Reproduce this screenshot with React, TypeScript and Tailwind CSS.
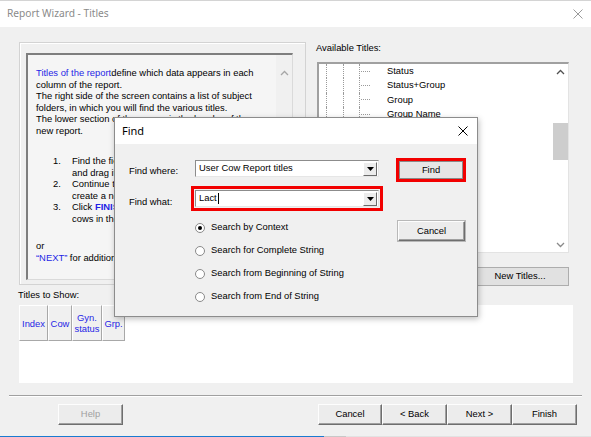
import React from 'react';

const sans = "font-['Liberation_Sans',Arial,sans-serif]";

function Chevron({ up = true, color = '#a0a0a0' }: { up?: boolean; color?: string }) {
  return (
    <svg width="9" height="6" viewBox="0 0 9 6">
      <path
        d={up ? 'M1 5 L4.5 1.5 L8 5' : 'M1 1 L4.5 4.5 L8 1'}
        fill="none"
        stroke={color}
        strokeWidth="1.3"
      />
    </svg>
  );
}

function CloseX({ color, size = 10 }: { color: string; size?: number }) {
  return (
    <svg width={size} height={size} viewBox="0 0 10 10">
      <path d="M0.5 0.5 L9.5 9.5 M9.5 0.5 L0.5 9.5" stroke={color} strokeWidth="1" />
    </svg>
  );
}

function Combo({ children }: { children: React.ReactNode }) {
  return (
    <div className="w-[184px] h-[17px] bg-white border-t border-l border-[#8c8c8c] border-r border-b border-r-[#e6e6e6] border-b-[#e6e6e6] flex items-center">
      <div className="flex-1 pl-[3px] text-black flex items-center whitespace-nowrap">{children}</div>
      <div className="w-[14px] h-[14px] mr-[1px] bg-[#ececec] border-t border-l border-white border-r border-b border-r-[#6a6a6a] border-b-[#6a6a6a] flex items-center justify-center">
        <svg width="7" height="4" viewBox="0 0 7 4">
          <path d="M0 0 H7 L3.5 4 Z" fill="#000" />
        </svg>
      </div>
    </div>
  );
}

function Radio({ label, checked = false }: { label: string; checked?: boolean }) {
  return (
    <div className="flex items-center h-[23px] pl-[66px] gap-[6px]">
      <div className="w-[10px] h-[10px] rounded-full bg-white border border-[#8a8a8a] flex items-center justify-center">
        {checked && <div className="w-[4px] h-[4px] rounded-full bg-black" />}
      </div>
      <span>{label}</span>
    </div>
  );
}

function WizButton({ label, disabled = false, w }: { label: string; disabled?: boolean; w: string }) {
  return (
    <div
      className={`${w} h-[21px] bg-[#ececec] border-t border-l border-[#fdfdfd] border-r border-b border-r-[#6e6e6e] border-b-[#6e6e6e] shadow-[inset_-1px_-1px_0_#a0a0a0] flex items-center justify-center ${
        disabled ? 'text-[#a0a0a0]' : 'text-black'
      }`}
    >
      {label}
    </div>
  );
}

function TreeRow({ label }: { label: string }) {
  return (
    <div className="flex h-[14.3px]">
      <div className="w-[7px]" />
      <div className="w-[17px] border-l border-dotted border-[#9a9a9a]" />
      <div className="w-[16px] border-l border-dotted border-[#9a9a9a]" />
      <div className="w-[28px] border-l border-dotted border-[#9a9a9a] flex items-center">
        <div className="ml-[1px] w-[9px] border-t border-dotted border-[#9a9a9a]" />
      </div>
      <span className="leading-[14.3px] whitespace-nowrap">{label}</span>
    </div>
  );
}

export default function App() {
  return (
    <div className={`${sans} text-[9.4px] text-black w-[591px] h-[437px] relative overflow-hidden bg-[#f0f0f0] flex flex-col`}>
      {/* window title bar */}
      <div className="h-[27px] shrink-0 bg-white border-t border-[#d4d4d4] flex items-center justify-between pl-[7px] pr-[8px]">
        <span className="font-['Noto_Sans','Open_Sans',sans-serif] text-[10.2px] text-[#8a8a8a]">Report Wizard - Titles</span>
        <CloseX color="#9a9a9a" size={10} />
      </div>

      {/* top section */}
      <div className="flex mt-[15px] ml-[19px] h-[244px]">
        {/* explanation group */}
        <div className="w-[287px] h-[243px] border border-[#d3d3d3] shadow-[inset_1px_1px_0_#ffffff] pt-[10px] pl-[6px]">
          <div className="w-[267px] h-[227px] border-t-2 border-l-2 border-t-[#7e7e7e] border-l-[#7e7e7e] border-r border-b border-r-[#dadada] border-b-[#dadada] flex">
            <div className="flex-1 bg-[#f5f5f5] pt-[12px] pl-[8px] overflow-hidden whitespace-nowrap leading-[11.5px]">
              <div>
                <span className="text-[#1f1fe6]">Titles of the report</span>define which data appears in each
              </div>
              <div>column of the report.</div>
              <div>The right side of the screen contains a list of subject</div>
              <div>folders, in which you will find the various titles.</div>
              <div>The lower section of the screen is the header of the</div>
              <div>new report.</div>
              <div className="mt-[19px]">
                {[
                  ['1.', 'Find the field you want in the list'],
                  ['', 'and drag it to the lower section.'],
                  ['2.', 'Continue this way until you'],
                  ['', 'create a new report.'],
                ].map(([n, t], i) => (
                  <div key={i} className="flex">
                    <span className="pl-[17px] w-[36px]">{n}</span>
                    <span>{t}</span>
                  </div>
                ))}
                <div className="flex">
                  <span className="pl-[17px] w-[36px]">3.</span>
                  <span>
                    Click <span className="text-[#1f1fe6] font-bold">FINISH</span> to see the list of
                  </span>
                </div>
                <div className="flex">
                  <span className="w-[36px]" />
                  <span>cows in the report.</span>
                </div>
              </div>
              <div className="mt-[16px]">or</div>
              <div>
                <span className="text-[#1f1fe6]">“NEXT”</span> for additional options.
              </div>
            </div>
            <div className="w-[16px] bg-[#f0f0f0] flex justify-center pt-[15px]">
              <Chevron up color="#a6a6a6" />
            </div>
          </div>
        </div>

        {/* available titles */}
        <div className="ml-[10px] w-[253px] flex flex-col">
          <div className="h-[20px] leading-[12px]">Available Titles:</div>
          <div className="ml-[1px] w-[252px] h-[191px] bg-white border-t-2 border-l-2 border-t-[#a0a0a0] border-l-[#a0a0a0] border-r border-b border-r-[#e3e3e3] border-b-[#e3e3e3] flex">
            <div className="flex-1 overflow-hidden">
              {['Status', 'Status+Group', 'Group', 'Group Name', 'Lact. No.', 'Days in Lact.', 'Lact. Status', 'Milk Yield', 'Calving Date', 'Dry Date', 'Days Pregnant', 'Insem. Date', 'Sire'].map((l) => (
                <TreeRow key={l} label={l} />
              ))}
            </div>
            <div className="w-[15px] flex flex-col">
              <div className="h-[15px] flex items-center justify-center">
                <Chevron up color="#505050" />
              </div>
              <div className="flex-1">
                <div className="mt-[44px] h-[37px] bg-[#cdcdcd]" />
              </div>
              <div className="h-[15px] flex items-center justify-center">
                <Chevron up={false} color="#8a8a8a" />
              </div>
            </div>
          </div>
          <div className="mt-[14px] ml-auto w-[98px] h-[19px] bg-[#e1e1e1] border border-[#adadad] flex items-center justify-center">
            New Titles...
          </div>
        </div>
      </div>

      {/* titles to show */}
      <div className="mt-[3px] ml-[18px] leading-[12px]">Titles to Show:</div>
      <div className="mt-[4px] ml-[19px] w-[554px] h-[78px] bg-white flex items-start">
        {[
          ['Index', 'w-[29px]'],
          ['Cow', 'w-[24px]'],
          ['Gyn.\nstatus', 'w-[30px]'],
          ['Grp.', 'w-[23px]'],
        ].map(([t, w]) => (
          <div
            key={t}
            className={`${w} h-[36px] bg-[#f0f0f0] border-t border-l border-white border-r border-b border-r-[#a8a8a8] border-b-[#a8a8a8] text-[#1f1fe6] flex items-center justify-center text-center whitespace-pre leading-[11px]`}
          >
            {t}
          </div>
        ))}
      </div>

      {/* separator */}
      <div className="mt-[12px] ml-[9px] w-[573px] border-t border-[#a0a0a0] border-b border-b-white" />

      {/* wizard buttons */}
      <div className="mt-[7px] flex">
        <div className="ml-[58px]">
          <WizButton label="Help" disabled w="w-[65px]" />
        </div>
        <div className="ml-[195px] flex">
          <WizButton label="Cancel" w="w-[64px]" />
          <WizButton label="< Back" w="w-[65px]" />
          <WizButton label="Next >" w="w-[65px]" />
          <WizButton label="Finish" w="w-[65px]" />
        </div>
      </div>

      {/* bottom edge */}
      <div className="mt-auto h-[1px] flex">
        <div className="w-[324px] bg-[#1a7bd0]" />
        <div className="w-[22px] bg-[#c8c8c8]" />
        <div className="flex-1 bg-[#e2e2e2]" />
      </div>

      {/* Find dialog */}
      <div className="absolute left-[114px] top-[117px] w-[364px] h-[200px] border border-[#8c8c8c] bg-[#f0f0f0] shadow-[1px_2px_6px_rgba(0,0,0,0.25)] flex flex-col">
        <div className="h-[26px] bg-white flex items-center justify-between pl-[7px] pr-[9px]">
          <span className="font-['Noto_Sans','Open_Sans',sans-serif] text-[11px]">Find</span>
          <CloseX color="#000" size={10} />
        </div>
        <div className="flex flex-1">
          <div className="w-[270px] pl-[14px]">
            <div className="mt-[16px] flex items-start h-[17px]">
              <span className="w-[66px] pt-[5px] leading-[11px]">Find where:</span>
              <Combo>User Cow Report titles</Combo>
            </div>
            <div className="mt-[9px] flex items-start">
              <span className="w-[62px] pt-[10px] leading-[11px]">Find what:</span>
              <div className="border-[3px] border-[#f20000] px-[1px] py-[1px]">
                <Combo>
                  Lact<span className="inline-block w-[1px] h-[11px] bg-black ml-[1px]" />
                </Combo>
              </div>
            </div>
            <div className="mt-[5px]">
              <Radio label="Search by Context" checked />
              <Radio label="Search for Complete String" />
              <Radio label="Search from Beginning of String" />
              <Radio label="Search from End of String" />
            </div>
          </div>
          <div className="ml-[11px] flex flex-col items-start">
            <div className="mt-[14px] w-[70px] h-[24px] border-[3px] border-[#f20000] flex">
              <div className="flex-1 bg-[#e6e6e6] border border-[#8a8a8a] flex items-center justify-center">Find</div>
            </div>
            <div className="mt-[39px] ml-[2px] w-[67px] h-[20px] bg-[#ececec] border-t border-l border-[#fdfdfd] border-r border-b border-r-[#6e6e6e] border-b-[#6e6e6e] shadow-[inset_-1px_-1px_0_#a0a0a0,0_0_0_1px_#b8b8b8] flex items-center justify-center">
              Cancel
            </div>
          </div>
        </div>
      </div>
    </div>
  );
}
